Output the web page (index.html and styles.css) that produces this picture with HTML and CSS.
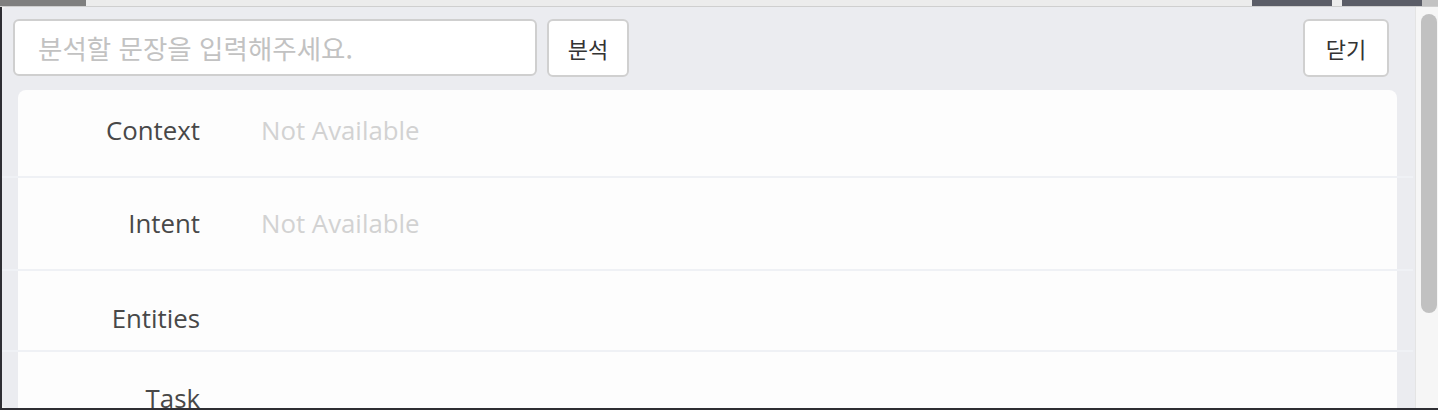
FILE: index.html
```html
<!DOCTYPE html>
<html lang="ko">
<head>
<meta charset="utf-8">
<link rel="stylesheet" href="styles.css">
</head>
<body>
<div class="topbar">
  <div class="tab tab-grey"></div>
  <div class="topbar-fill"></div>
  <div class="tab tab-dark"></div>
  <div class="tab-gap"></div>
  <div class="tab tab-dark tab-dark2"></div>
  <div class="tab tab-light"></div>
</div>
<div class="main">
  <div class="panel">
    <div class="toolbar">
      <input class="query" type="text" placeholder="분석할 문장을 입력해주세요.">
      <button class="btn btn-analyze">분석</button>
      <div class="spacer"></div>
      <button class="btn btn-close">닫기</button>
    </div>
    <div class="rows">
      <div class="row row-first">
        <div class="cell">
          <div class="label">Context</div>
          <div class="value">Not Available</div>
        </div>
      </div>
      <div class="row row-mid">
        <div class="cell">
          <div class="label">Intent</div>
          <div class="value">Not Available</div>
        </div>
      </div>
      <div class="row row-short">
        <div class="cell">
          <div class="label">Entities</div>
          <div class="value"></div>
        </div>
      </div>
      <div class="row row-last">
        <div class="cell">
          <div class="label">Task</div>
          <div class="value"></div>
        </div>
      </div>
    </div>
  </div>
  <div class="scrolltrack">
    <div class="scrollthumb"></div>
  </div>
</div>
</body>
</html>
```

FILE: styles.css
```css
html, body {
  margin: 0;
  padding: 0;
}
body {
  width: 1438px;
  height: 410px;
  overflow: hidden;
  background: #2e2e33;
  font-family: "Open Sans", "Noto Sans CJK KR", sans-serif;
  display: flex;
  flex-direction: column;
}
.topbar {
  height: 6px;
  flex: 0 0 6px;
  display: flex;
  background: #ececec;
  border-bottom: 1px solid #cfcfcf;
}
.tab { height: 6px; }
.tab-grey { width: 86px; background: #7f7f7f; }
.topbar-fill { flex: 1; }
.tab-dark { width: 80px; background: #5b5d67; }
.tab-gap { width: 10px; }
.tab-dark2 { width: 80px; }
.tab-light { width: 16px; background: #c3c3c3; }

.main {
  flex: 0 0 401px;
  height: 401px;
  display: flex;
  margin-left: 2px;
  overflow: hidden;
  background: #f6f6f6;
}
.panel {
  flex: 1;
  background: #ebecf0;
  border-radius: 5px 0 0 5px;
  overflow: hidden;
  display: flex;
  flex-direction: column;
}
.toolbar {
  display: flex;
  align-items: flex-start;
  padding: 12px 26px 0 11px;
  height: 83px;
  box-sizing: border-box;
  flex: 0 0 83px;
}
.query {
  width: 524px;
  height: 57px;
  box-sizing: border-box;
  border: 2px solid #cfcfcf;
  border-radius: 6px;
  background: #fff;
  padding: 0 0 0 23px;
  margin: 0;
  font-family: "Noto Sans CJK KR", sans-serif;
  font-size: 26.5px;
  color: #333;
  outline: none;
}
.query::placeholder {
  color: #c2c2c2;
}
.btn {
  height: 58px;
  box-sizing: border-box;
  border: 2px solid #d0d0d0;
  border-radius: 6px;
  background: #fff;
  font-family: "Noto Sans CJK KR", sans-serif;
  font-size: 22px;
  color: #333;
  padding: 0;
  margin: 0;
}
.btn-analyze {
  width: 82px;
  margin-left: 10px;
}
.btn-close {
  width: 86px;
}
.spacer { flex: 1; }

.rows {
  flex: 1;
  margin-right: 2px;
}
.row {
  border-bottom: 2px solid #eff1f5;
}
.cell {
  margin: 0 16px 0 16px;
  background: #fdfdfd;
  display: flex;
  align-items: flex-start;
  height: 100%;
  box-sizing: border-box;
  padding-top: 27px;
}
.row-first .cell {
  border-radius: 8px 8px 0 0;
  padding-top: 22px;
  height: 86px;
}
.row-mid .cell { height: 91px; }
.row-short .cell { height: 79px; padding-top: 29px; }
.row-last .cell { height: 90px; padding-top: 28px; }
.label {
  width: 182px;
  text-align: right;
  font-size: 25.8px;
  line-height: 36px;
  color: #484848;
  flex: 0 0 182px;
}
.value {
  margin-left: 61px;
  font-size: 25.8px;
  line-height: 36px;
  color: #d2d2d2;
}

.scrolltrack {
  width: 23px;
  flex: 0 0 23px;
  background: #f6f6f6;
  border-left: 1px solid #e4e4e4;
  padding: 7px 0 0 5px;
  box-sizing: border-box;
}
.scrollthumb {
  width: 16px;
  height: 299px;
  border-radius: 8px;
  background: #c1c1c1;
}
```
